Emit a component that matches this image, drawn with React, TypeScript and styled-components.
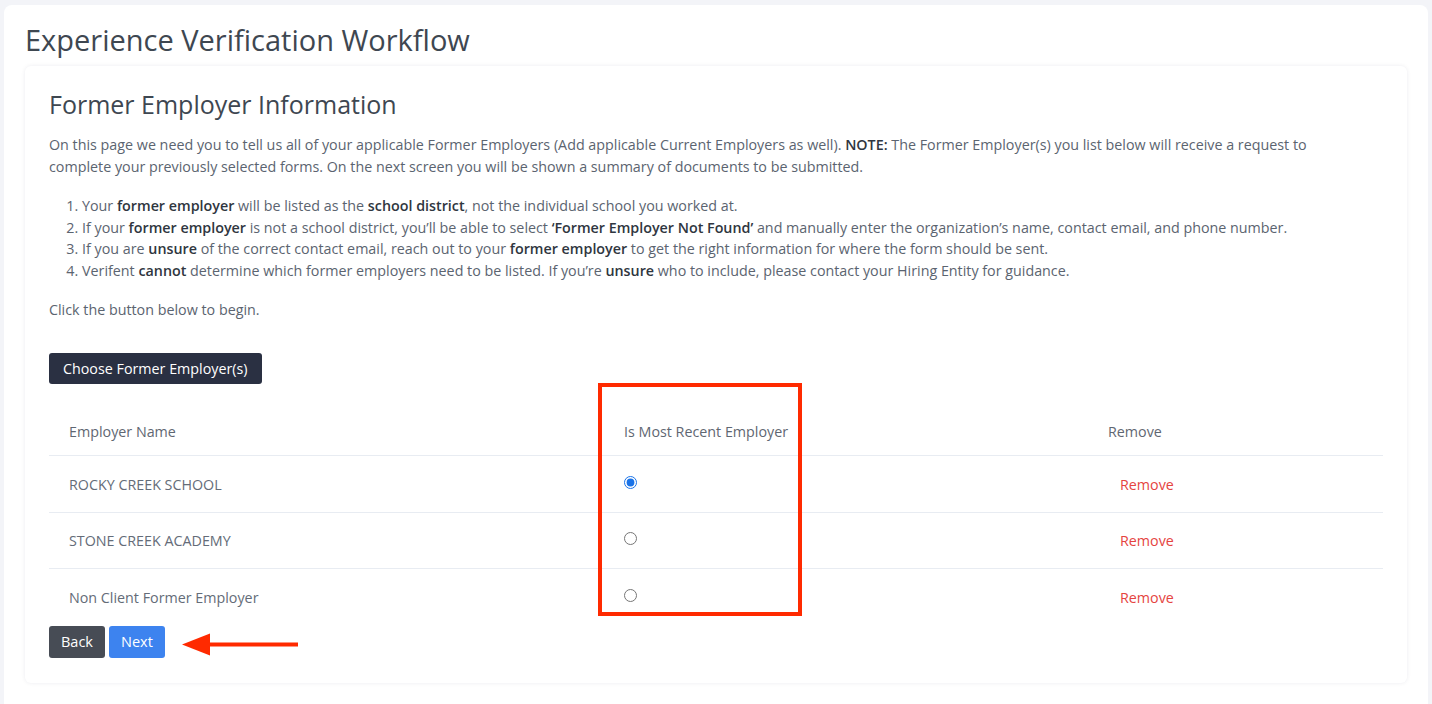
import styled, { createGlobalStyle } from "styled-components";
import { useState } from "react";

const GlobalStyle = createGlobalStyle`
  html, body {
    margin: 0;
    padding: 0;
    background: #f3f4f8;
    font-family: "Open Sans", "Liberation Sans", sans-serif;
  }
`;

const employers = [
  "ROCKY CREEK SCHOOL",
  "STONE CREEK ACADEMY",
  "Non Client Former Employer",
];

const App = () => {
  const [recent, setRecent] = useState(0);

  return (
    <>
      <GlobalStyle />
      <Page>
        <OuterCard>
          <Title>Experience Verification Workflow</Title>
          <InnerCard>
            <Heading>Former Employer Information</Heading>
            <Paragraph>
              On this page we need you to tell us all of your applicable Former
              Employers (Add applicable Current Employers as well).{" "}
              <b>NOTE:</b> The Former Employer(s) you list below will receive a
              request to complete your previously selected forms. On the next
              screen you will be shown a summary of documents to be submitted.
            </Paragraph>
            <Steps>
              <li>
                Your <b>former employer</b> will be listed as the{" "}
                <b>school district</b>, not the individual school you worked at.
              </li>
              <li>
                If your <b>former employer</b> is not a school district, you’ll
                be able to select <b>‘Former Employer Not Found’</b> and manually
                enter the organization’s name, contact email, and phone number.
              </li>
              <li>
                If you are <b>unsure</b> of the correct contact email, reach out
                to your <b>former employer</b> to get the right information for
                where the form should be sent.
              </li>
              <li>
                Verifent <b>cannot</b> determine which former employers need to
                be listed. If you’re <b>unsure</b> who to include, please contact
                your Hiring Entity for guidance.
              </li>
            </Steps>
            <Paragraph>Click the button below to begin.</Paragraph>
            <ChooseButton>Choose Former Employer(s)</ChooseButton>

            <TableWrap>
              <HeaderRow>
                <Cell>Employer Name</Cell>
                <Cell>Is Most Recent Employer</Cell>
                <Cell>Remove</Cell>
              </HeaderRow>
              {employers.map((name, index) => (
                <Row key={name} last={index === employers.length - 1}>
                  <Cell>{name}</Cell>
                  <Cell>
                    <Radio
                      type="radio"
                      name="recent"
                      checked={recent === index}
                      onChange={() => setRecent(index)}
                    />
                  </Cell>
                  <Cell>
                    <RemoveLink>Remove</RemoveLink>
                  </Cell>
                </Row>
              ))}
              <Highlight />
            </TableWrap>

            <Actions>
              <ActionButton bg="#474c55">Back</ActionButton>
              <ActionButton bg="#3d83ef">Next</ActionButton>
              <Arrow width="118" height="24" viewBox="0 0 118 24">
                <path d="M116 11.5 H24" stroke="#ff2a00" strokeWidth="4" />
                <path d="M0 11.5 L28 0.5 L28 22.5 Z" fill="#ff2a00" />
              </Arrow>
            </Actions>
          </InnerCard>
        </OuterCard>
      </Page>
    </>
  );
};

export default App;

const Page = styled.div`
  padding: 5px 4px 0;
  height: 699px;
  overflow: hidden;
`;

const OuterCard = styled.div`
  background: #ffffff;
  border-radius: 8px;
  padding: 19px 21px 30px;
`;

const Title = styled.h1`
  margin: 0 0 10px;
  font-size: 29px;
  font-weight: 500;
  line-height: 32px;
  color: #3e4751;
`;

const InnerCard = styled.div`
  background: #ffffff;
  border-radius: 6px;
  box-shadow: 0 0 4px rgba(20, 30, 60, 0.08);
  padding: 22px 24px 25px;
`;

const Heading = styled.h2`
  margin: 0 0 14px;
  font-size: 25px;
  font-weight: 500;
  line-height: 32px;
  color: #3e4751;
`;

const Paragraph = styled.p`
  margin: 0;
  max-width: 1300px;
  font-size: 14.3px;
  line-height: 22px;
  color: #5b6470;
  b {
    font-weight: 600;
    color: #2f3640;
  }
`;

const Steps = styled.ol`
  margin: 17px 0;
  padding-left: 33px;
  font-size: 14.3px;
  line-height: 21.7px;
  color: #5b6470;
  b {
    font-weight: 600;
    color: #2f3640;
  }
`;

const ChooseButton = styled.button`
  display: block;
  margin-top: 32px;
  height: 31px;
  padding: 0 14px;
  border: none;
  border-radius: 3px;
  background: #2a3042;
  color: #ffffff;
  font-family: inherit;
  font-size: 14.3px;
  font-weight: 500;
`;

const TableWrap = styled.div`
  position: relative;
  margin-top: 24px;
`;

const HeaderRow = styled.div`
  display: grid;
  grid-template-columns: 555px 484px 1fr;
  box-sizing: border-box;
  height: 48.5px;
  align-items: center;
  border-bottom: 1px solid #e8ecf2;
  font-size: 14.3px;
  font-weight: 500;
  color: #5f6772;
`;

const Row = styled.div<{ last?: boolean }>`
  display: grid;
  grid-template-columns: 555px 484px 1fr;
  box-sizing: border-box;
  height: 56.5px;
  align-items: center;
  border-bottom: ${(props) => (props.last ? "none" : "1px solid #e8ecf2")};
  font-size: 14.3px;
  color: #646c78;
`;

const Cell = styled.div`
  padding: 0 20px;
  display: flex;
  align-items: center;
`;

const Radio = styled.input`
  margin: 0 0 4px;
  width: 13px;
  height: 13px;
  accent-color: #1a73e8;
`;

const RemoveLink = styled.span`
  padding: 0 12px;
  color: #e5443f;
  cursor: pointer;
`;

const Highlight = styled.div`
  position: absolute;
  left: 549px;
  top: -25px;
  width: 204px;
  height: 233px;
  box-sizing: border-box;
  border: 4px solid #ff2a00;
  pointer-events: none;
`;

const Actions = styled.div`
  display: flex;
  align-items: center;
  gap: 4px;
`;

const ActionButton = styled.button<{ bg: string }>`
  height: 32px;
  padding: 0 12px;
  border: none;
  border-radius: 3px;
  background: ${(props) => props.bg};
  color: #ffffff;
  font-family: inherit;
  font-size: 14.5px;
  font-weight: 500;
`;

const Arrow = styled.svg`
  margin-left: 13px;
  margin-top: 6px;
`;
